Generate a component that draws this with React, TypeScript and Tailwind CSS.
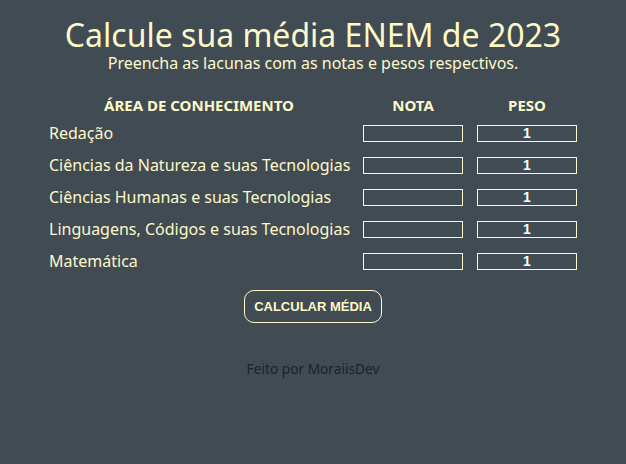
import { useState } from "react";

const areas = [
  "Redação",
  "Ciências da Natureza e suas Tecnologias",
  "Ciências Humanas e suas Tecnologias",
  "Linguagens, Códigos e suas Tecnologias",
  "Matemática",
];

export default function App() {
  const [notas, setNotas] = useState<string[]>(areas.map(() => ""));
  const [pesos, setPesos] = useState<string[]>(areas.map(() => "1"));

  return (
    <div className="min-h-screen w-full bg-[#414b54] flex flex-col items-center font-['Noto_Sans',sans-serif] text-[#fef9c8]">
      <h1 className="mt-[19px] text-[32px] leading-[32px]">Calcule sua média ENEM de 2023</h1>
      <p className="mt-[2px] text-[16px] leading-[20px]">Preencha as lacunas com as notas e pesos respectivos.</p>

      <div className="mt-[20px] grid grid-cols-[300px_100px_100px] gap-x-[14px]">
        <div className="h-[24px] flex items-center justify-center font-bold text-[15px]">ÁREA DE CONHECIMENTO</div>
        <div className="h-[24px] flex items-center justify-center font-bold text-[15px]">NOTA</div>
        <div className="h-[24px] flex items-center justify-center font-bold text-[15px]">PESO</div>

        {areas.map((area, i) => (
          <div key={area} className="contents">
            <div className="h-[32px] flex items-center pb-[1px] text-[16px] whitespace-nowrap">{area}</div>
            <div className="h-[32px] flex items-center">
              <input
                value={notas[i]}
                onChange={(e) => setNotas(notas.map((n, j) => (j === i ? e.target.value : n)))}
                className="w-[100px] h-[17px] border border-[#fef9c8] bg-transparent text-center text-[14px] font-bold font-['Liberation_Sans',sans-serif] text-white outline-none"
              />
            </div>
            <div className="h-[32px] flex items-center">
              <input
                value={pesos[i]}
                onChange={(e) => setPesos(pesos.map((p, j) => (j === i ? e.target.value : p)))}
                className="w-[100px] h-[17px] border border-[#fef9c8] bg-transparent text-center text-[14px] font-bold font-['Liberation_Sans',sans-serif] text-white outline-none"
              />
            </div>
          </div>
        ))}
      </div>

      <button className="mt-[13px] h-[33px] px-[9px] rounded-[10px] border border-[#fef9c8] font-['Liberation_Sans',sans-serif] font-bold text-[13px] text-[#fef9c8]">
        CALCULAR MÉDIA
      </button>

      <footer className="mt-[36px] text-[13.7px] leading-[20px] text-[#1e2226]">Feito por MoraiisDev</footer>
    </div>
  );
}
